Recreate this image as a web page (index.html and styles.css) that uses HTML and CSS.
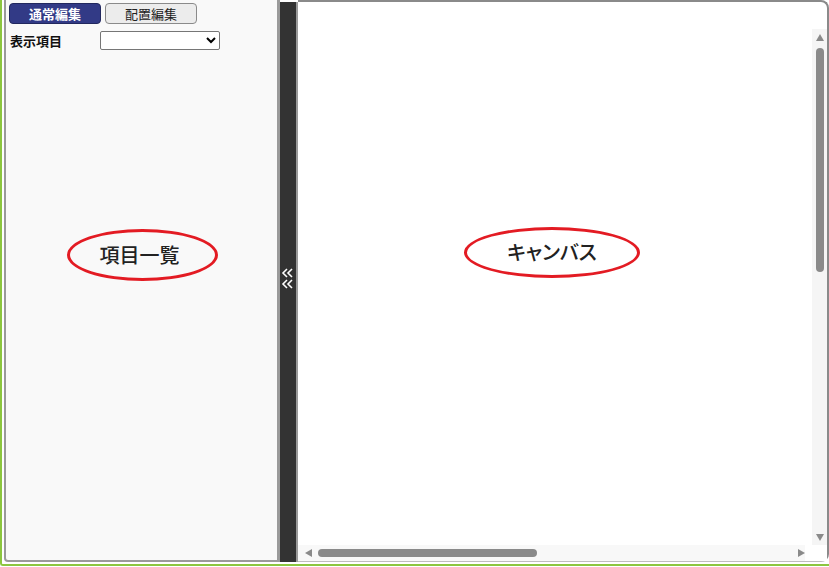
FILE: index.html
```html
<!DOCTYPE html>
<html lang="ja">
<head>
<meta charset="utf-8">
<link rel="stylesheet" href="styles.css">
</head>
<body>
<div class="outer">
  <div class="left">
    <div class="tabs">
      <button class="tab tab-on">通常編集</button>
      <button class="tab tab-off">配置編集</button>
    </div>
    <div class="field">
      <span class="label">表示項目</span>
      <select class="sel"><option></option></select>
    </div>
    <div class="left-body">
      <div class="oval oval-left">項目一覧</div>
    </div>
  </div>
  <div class="splitter">
    <svg class="chev" width="14" height="24" viewBox="0 0 14 24">
      <path d="M6 2 L2 6 L6 10 M11 2 L7 6 L11 10" fill="none" stroke="#fff" stroke-width="1.6"/>
      <path d="M6 13 L2 17 L6 21 M11 13 L7 17 L11 21" fill="none" stroke="#fff" stroke-width="1.6"/>
    </svg>
  </div>
  <div class="canvas">
    <div class="canvas-top"></div>
    <div class="canvas-mid">
      <div class="canvas-body">
        <div class="oval oval-right">キャンバス</div>
      </div>
      <div class="vscroll">
        <span class="arrow-up"></span>
        <div class="vtrack"><div class="vthumb"></div></div>
        <span class="arrow-down"></span>
      </div>
    </div>
    <div class="hscroll">
      <span class="arrow-left"></span>
      <div class="htrack"><div class="hthumb"></div></div>
      <span class="arrow-right"></span>
      <div class="corner"></div>
    </div>
  </div>
</div>
</body>
</html>
```

FILE: styles.css
```css
* { box-sizing: border-box; }
html, body { margin: 0; padding: 0; background: #fff; }
body {
  width: 829px;
  height: 567px;
  overflow: hidden;
  font-family: "Noto Sans CJK JP", "Noto Sans", sans-serif;
}
.outer {
  display: flex;
  height: 566px;
  border-left: 2px solid #8cc63f;
  border-bottom: 2px solid #8cc63f;
  border-bottom-left-radius: 3px;
  padding: 0 0 2px 2px;
}
.left {
  width: 276px;
  background: #f9f9f9;
  border-left: 2px solid #9a9a9a;
  border-bottom: 2px solid #9a9a9a;
  border-right: 3px solid #9a9a9a;
  border-bottom-left-radius: 4px;
  display: flex;
  flex-direction: column;
  padding: 3px 0 0 3px;
}
.tabs { display: flex; gap: 4px; }
.tab {
  width: 92px;
  height: 21px;
  border-radius: 4px;
  font-family: "Noto Sans CJK JP", sans-serif;
  font-size: 13px;
  line-height: 17px;
  padding: 0;
  margin: 0;
}
.tab-on {
  background: #323a86;
  color: #fff;
  font-weight: bold;
  border: 1px solid #22285e;
}
.tab-off {
  background: #ececec;
  color: #222;
  border: 1px solid #8a8a8a;
}
.field {
  display: flex;
  align-items: center;
  margin-top: 7px;
  height: 19px;
}
.label {
  font-size: 13px;
  font-weight: bold;
  color: #111;
  width: 91px;
  padding-left: 1px;
}
.sel {
  width: 120px;
  height: 19px;
  font-size: 12px;
  border: 1px solid #767676;
  border-radius: 2px;
  background: #fff;
}
.left-body {
  flex: 1;
  display: flex;
  align-items: flex-start;
  padding: 179px 0 0 58px;
}
.oval {
  border: 3px solid #e31b23;
  border-radius: 50%;
  display: flex;
  align-items: center;
  justify-content: center;
  font-size: 20px;
  font-weight: 500;
  color: #222;
}
.oval-left { width: 151px; height: 52px; padding: 0 6px 2px 0; }
.oval-right {
  width: 176px;
  height: 51px;
  padding-bottom: 2px;
  font-feature-settings: "palt";
}
.splitter {
  width: 18px;
  background: #333;
  border-right: 2px solid #9a9a9a;
  margin-top: 2px;
  display: flex;
  align-items: center;
  justify-content: center;
  padding-bottom: 6px;
}
.chev { display: block; }
.canvas {
  flex: 1;
  background: #fff;
  border-top: 2px solid #8a8a8a;
  border-right: 2px solid #8a8a8a;
  border-bottom: 1px solid #bdbdbd;
  border-top-right-radius: 8px;
  border-bottom-right-radius: 8px;
  display: flex;
  flex-direction: column;
}
.canvas-top { height: 27px; }
.canvas-mid { flex: 1; display: flex; }
.canvas-body {
  flex: 1;
  display: flex;
  align-items: flex-start;
  padding: 198px 0 0 166px;
}
.vscroll {
  width: 15px;
  background: #f5f5f5;
  display: flex;
  flex-direction: column;
  align-items: center;
  padding: 5px 0 4px;
}
.arrow-up {
  width: 0; height: 0;
  border-left: 4px solid transparent;
  border-right: 4px solid transparent;
  border-bottom: 7px solid #8a8a8a;
}
.arrow-down {
  width: 0; height: 0;
  border-left: 4px solid transparent;
  border-right: 4px solid transparent;
  border-top: 7px solid #8a8a8a;
}
.vtrack { flex: 1; width: 8px; padding: 7px 0; }
.vthumb { width: 8px; height: 224px; background: #8a8a8a; border-radius: 4px; }
.hscroll {
  height: 16px;
  background: #f8f8f8;
  display: flex;
  align-items: center;
  padding-left: 7px;
}
.arrow-left {
  width: 0; height: 0;
  border-top: 4px solid transparent;
  border-bottom: 4px solid transparent;
  border-right: 7px solid #8a8a8a;
}
.arrow-right {
  width: 0; height: 0;
  border-top: 4px solid transparent;
  border-bottom: 4px solid transparent;
  border-left: 7px solid #8a8a8a;
}
.htrack { flex: 1; height: 8px; padding: 0 6px; }
.hthumb { width: 219px; height: 8px; background: #8a8a8a; border-radius: 4px; }
.corner { width: 22px; height: 16px; background: #fff; }
```
